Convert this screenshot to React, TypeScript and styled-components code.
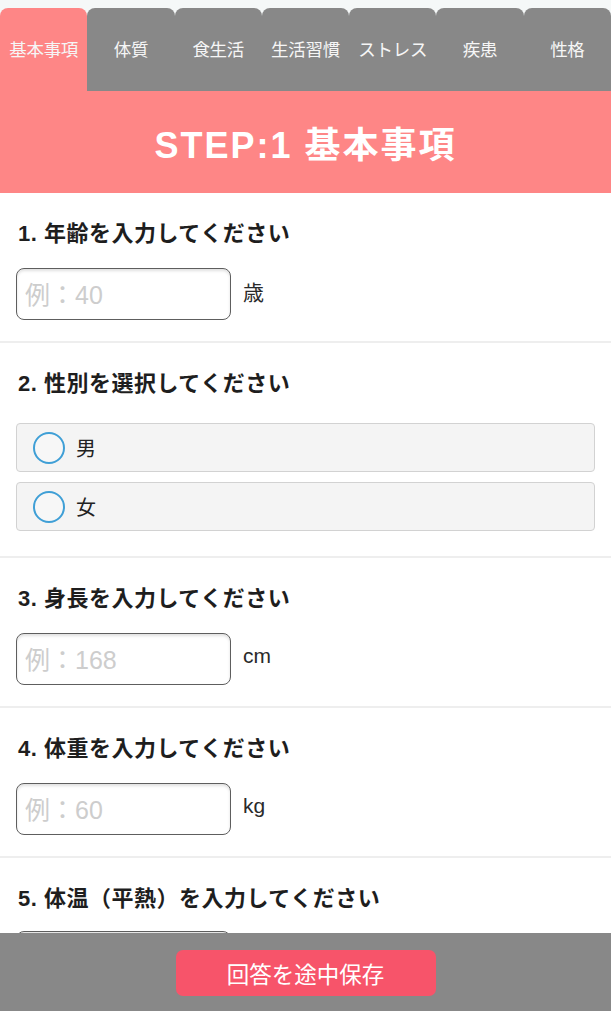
import React from "react";
import styled, { createGlobalStyle } from "styled-components";

const FONT = `"Liberation Sans", "Noto Sans CJK JP", sans-serif`;

const GlobalStyle = createGlobalStyle`
  html, body { margin: 0; padding: 0; background: #ffffff; }
  body { font-family: ${FONT}; color: #222; }
  * { box-sizing: border-box; }
`;

const Page = styled.div`
  width: 100%;
  height: 100vh;
  display: flex;
  flex-direction: column;
`;

const Content = styled.main`
  flex: 1 1 auto;
  min-height: 0;
  overflow: hidden;
`;

const TabBar = styled.nav`
  display: flex;
  background: #f5f8f8;
  padding-top: 8px;
`;

const Tab = styled.div<{ $active?: boolean }>`
  flex: 1 1 0;
  height: 83px;
  display: flex;
  align-items: center;
  justify-content: center;
  padding-bottom: 3px;
  border-radius: 8px 8px 0 0;
  background: ${(p) => (p.$active ? "#fe8686" : "#888888")};
  color: #f6f6f6;
  font-size: 17.5px;
  white-space: nowrap;
  letter-spacing: -0.3px;
`;

const Header = styled.header`
  height: 102px;
  background: #fe8686;
  display: flex;
  align-items: center;
  justify-content: center;
`;

const HeaderTitle = styled.h1`
  margin: 0;
  color: #ffffff;
  font-size: 36px;
  font-weight: 700;
  letter-spacing: 2px;
`;

const Section = styled.section<{ $gap?: number }>`
  padding: 27px 16px 21px;
  border-bottom: 2px solid #eeeeee;
  display: flex;
  flex-direction: column;
  gap: ${(p) => p.$gap ?? 20}px;
`;

const RadioSection = styled(Section)`
  gap: 25px;
  padding-bottom: 25px;
`;

const QuestionTitle = styled.h2`
  margin: 0;
  height: 28px;
  line-height: 28px;
  font-size: 22px;
  font-weight: 700;
  color: #1e1e1e;
  padding-left: 2px;
  letter-spacing: 0.5px;
`;

const InputRow = styled.div`
  display: flex;
  align-items: center;
  gap: 12px;
`;

const TextInput = styled.input`
  width: 215px;
  height: 52px;
  border: 1.5px solid #5e5e5e;
  border-radius: 8px;
  background: #fff;
  box-shadow: inset 0 2px 3px rgba(0, 0, 0, 0.12);
  padding: 2px 0 0 8px;
  font-family: ${FONT};
  font-size: 25px;
  color: #222;
  outline: none;
  &::placeholder {
    color: #cdcdcd;
  }
`;

const Unit = styled.span`
  font-size: 21px;
  color: #2a2a2a;
  margin-top: -6px;
`;

const RadioList = styled.div`
  display: flex;
  flex-direction: column;
  gap: 10px;
`;

const RadioOption = styled.label`
  height: 49px;
  display: flex;
  align-items: center;
  gap: 11px;
  padding-left: 16px;
  background: #f4f4f4;
  border: 1.5px solid #d2d2d2;
  border-radius: 4px;
`;

const RadioCircle = styled.span`
  width: 32px;
  height: 32px;
  border-radius: 50%;
  border: 2px solid #3f9fd6;
  background: #f7f7f7;
`;

const RadioLabel = styled.span`
  font-size: 20px;
  color: #222;
`;

const Footer = styled.footer`
  flex: 0 0 78px;
  margin-bottom: 13px;
  background: #888888;
  display: flex;
  justify-content: center;
  padding-top: 17px;
`;

const SaveButton = styled.button`
  width: 260px;
  height: 46px;
  border: none;
  border-radius: 7px;
  background: #f7546a;
  color: #fff;
  font-family: ${FONT};
  font-size: 22.5px;
  cursor: pointer;
`;

const tabs = ["基本事項", "体質", "食生活", "生活習慣", "ストレス", "疾患", "性格"];

const NumberQuestion: React.FC<{
  title: string;
  placeholder?: string;
  unit?: string;
  gap?: number;
}> = ({ title, placeholder, unit, gap }) => (
  <Section $gap={gap}>
    <QuestionTitle>{title}</QuestionTitle>
    <InputRow>
      <TextInput type="text" placeholder={placeholder} />
      {unit && <Unit>{unit}</Unit>}
    </InputRow>
  </Section>
);

export default function App() {
  return (
    <Page>
      <GlobalStyle />
      <Content>
        <TabBar>
          {tabs.map((t, i) => (
            <Tab key={t} $active={i === 0}>
              {t}
            </Tab>
          ))}
        </TabBar>
        <Header>
          <HeaderTitle>STEP:1 基本事項</HeaderTitle>
        </Header>
        <NumberQuestion title="1. 年齢を入力してください" placeholder="例：40" unit="歳" />
        <RadioSection>
          <QuestionTitle>2. 性別を選択してください</QuestionTitle>
          <RadioList>
            {["男", "女"].map((g) => (
              <RadioOption key={g}>
                <RadioCircle />
                <RadioLabel>{g}</RadioLabel>
              </RadioOption>
            ))}
          </RadioList>
        </RadioSection>
        <NumberQuestion title="3. 身長を入力してください" placeholder="例：168" unit="cm" />
        <NumberQuestion title="4. 体重を入力してください" placeholder="例：60" unit="kg" />
        <NumberQuestion title="5. 体温（平熱）を入力してください" gap={18} />
      </Content>
      <Footer>
        <SaveButton>回答を途中保存</SaveButton>
      </Footer>
    </Page>
  );
}
